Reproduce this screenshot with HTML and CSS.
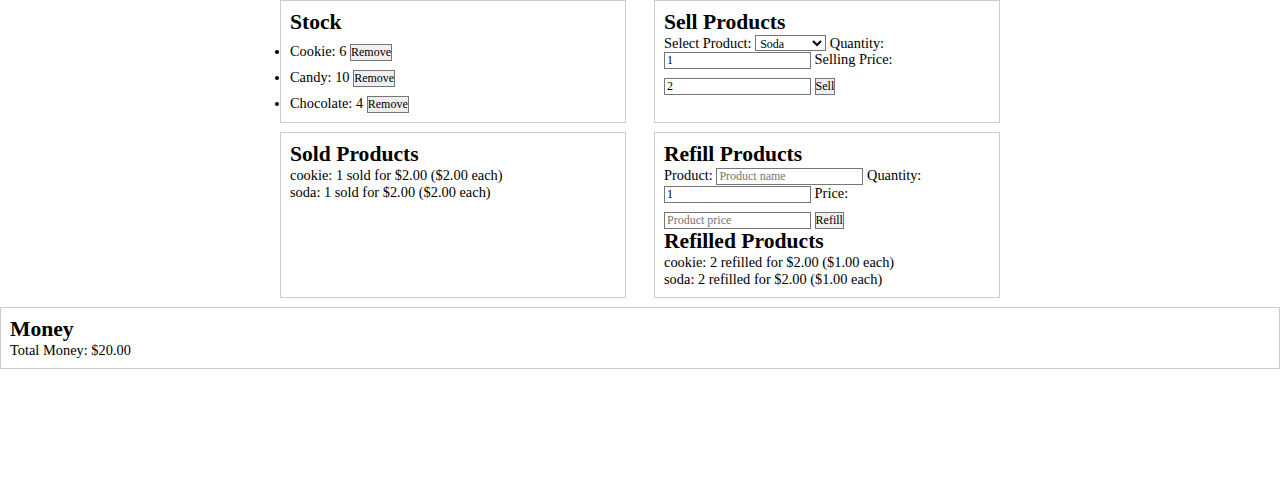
FILE: index.html
```html
<!DOCTYPE html>
<html lang="en">
<head>
<meta charset="utf-8">
<title>Shop</title>
<link rel="stylesheet" href="styles.css">
</head>
<body>
<div class="grid">
  <section class="box">
    <h2>Stock</h2>
    <ul class="stock">
      <li>Cookie: 6 <button class="btn">Remove</button></li>
      <li>Candy: 10 <button class="btn">Remove</button></li>
      <li>Chocolate: 4 <button class="btn">Remove</button></li>
    </ul>
  </section>
  <section class="box">
    <h2>Sell Products</h2>
    <div class="form">
      <label>Select Product:</label>
      <select class="sel"><option>Soda</option><option>Cookie</option></select>
      <label>Quantity:</label>
      <input class="inp" type="text" value="1">
      <label>Selling Price:</label>
      <input class="inp" type="text" value="2">
      <button class="btn">Sell</button>
    </div>
  </section>
  <section class="box">
    <h2>Sold Products</h2>
    <div class="line">cookie: 1 sold for $2.00 ($2.00 each)</div>
    <div class="line">soda: 1 sold for $2.00 ($2.00 each)</div>
  </section>
  <section class="box">
    <h2>Refill Products</h2>
    <div class="form">
      <label>Product:</label>
      <input class="inp" type="text" placeholder="Product name">
      <label>Quantity:</label>
      <input class="inp" type="text" value="1">
      <label>Price:</label>
      <input class="inp" type="text" placeholder="Product price">
      <button class="btn">Refill</button>
    </div>
    <h2>Refilled Products</h2>
    <div class="line">cookie: 2 refilled for $2.00 ($1.00 each)</div>
    <div class="line">soda: 2 refilled for $2.00 ($1.00 each)</div>
  </section>
</div>
<section class="box money">
  <h2>Money</h2>
  <div class="line">Total Money: $20.00</div>
</section>
</body>
</html>
```

FILE: styles.css
```css
html, body {
  margin: 0;
  padding: 0;
  background: #fff;
}
body {
  font-family: "Liberation Serif", "Times New Roman", serif;
  font-size: 14.4px;
  color: #000;
}
.grid {
  display: grid;
  grid-template-columns: 346px 346px;
  justify-content: center;
  gap: 9px 28px;
}
.box {
  box-sizing: border-box;
  border: 1px solid #ccc;
  padding: 9px;
}
.money {
  margin-top: 9px;
}
h2 {
  margin: 0;
  font-size: 21.6px;
  font-weight: bold;
}
.stock {
  margin: 0;
  padding: 0;
  list-style: disc outside;
}
.line {
  margin: 0;
}
.form {
  line-height: 16px;
}
.btn {
  font-family: "Liberation Serif", "Times New Roman", serif;
  font-size: 12px;
  line-height: 13px;
  color: #000;
  background: #efefef;
  border: 1px solid #767676;
  border-radius: 0;
  padding: 1px 0;
  margin: 9px 0 0 0;
}
.inp {
  box-sizing: border-box;
  width: 147px;
  height: 17px;
  font-family: "Liberation Serif", "Times New Roman", serif;
  font-size: 12px;
  color: #000;
  border: 1px solid #767676;
  border-radius: 0;
  padding: 1px 2px;
  margin: 0;
}
.inp::placeholder {
  color: #757575;
}
.sel {
  box-sizing: border-box;
  width: 71px;
  height: 16px;
  font-family: "Liberation Serif", "Times New Roman", serif;
  font-size: 12px;
  color: #000;
  border: 1px solid #767676;
  border-radius: 0;
  padding: 0;
  margin: 0;
  background: #fff;
}
```
